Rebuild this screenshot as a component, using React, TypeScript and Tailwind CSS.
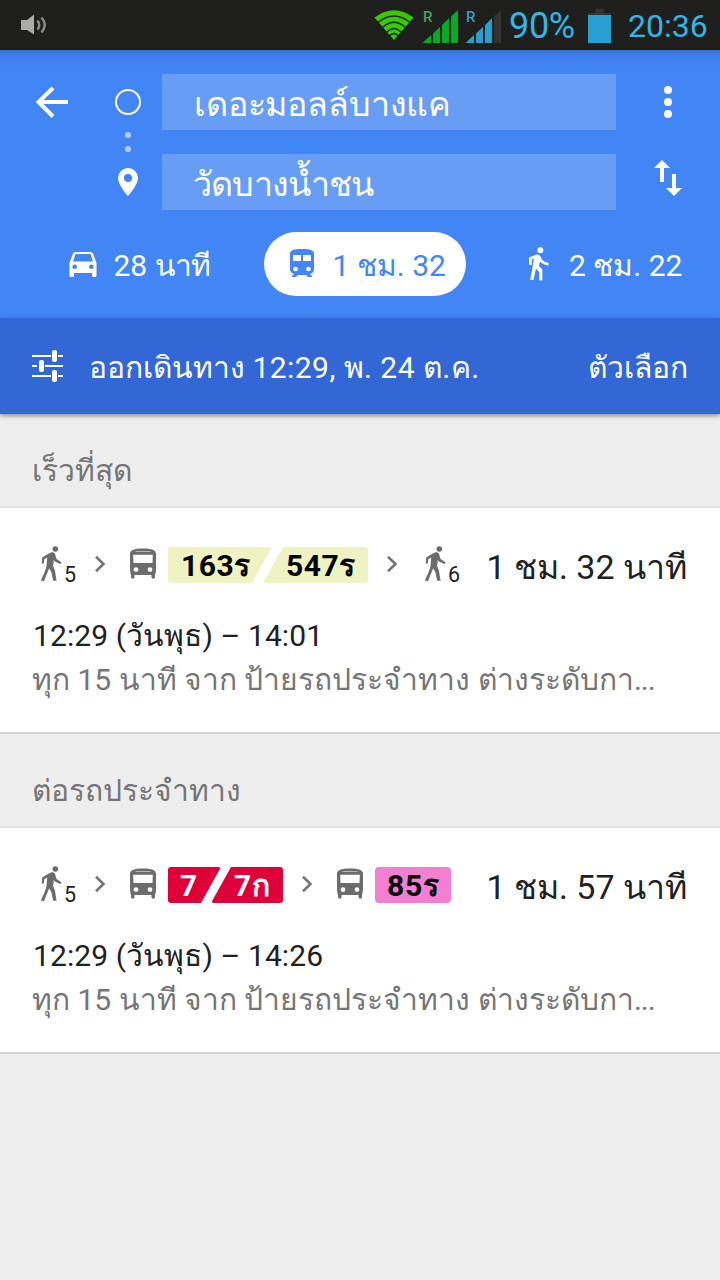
import type { ReactNode } from "react";

function SoundIcon() {
  return (
    <svg className="ml-[20px] h-[22px] w-[28px]" viewBox="0 0 28 22">
      <path d="M1 6h6l7-5.500v20L7 16H1z" fill="#aaa" />
      <path d="M17.500 6.500q3.600 4.500 0 9M21.500 3.500q6.500 7.500 0 15" fill="none" stroke="#8c8c8b" strokeWidth="2.400" />
    </svg>
  );
}

function WifiIcon() {
  return (
    <svg className="h-[32px] w-[40px]" viewBox="0 0 40 32">
      <path d="M.5 8.500Q20-6 39.500 8.500L20 31z" fill="#3ac800" />
      <path d="M4.500 13Q20 1 35.500 13M9 18Q20 8.500 31 18M13 23Q20 16 27 23M16 26.500Q20 22.500 24 26.500" fill="none" stroke="#16202b" strokeWidth="1.300" />
    </svg>
  );
}

function Signal({ color, letter, last }: { color: string; letter: string; last: string }) {
  return (
    <div className="relative h-[34px] w-[37px]">
      <svg className="h-[34px] w-[37px]" viewBox="0 0 37 34">
        <path d="M.5 33L9 25v8zM11 23.500l7-6.500v16h-7zM20 15l7-7v25h-7z" fill={color} />
        <path d="M29 6.500l7-6.500v33h-7z" fill={last} />
      </svg>
      <span className="absolute left-[1px] top-[-1px] text-[15px] font-medium leading-[17px]" style={{ color: letter }}>R</span>
    </div>
  );
}

function Walk({ minutes }: { minutes: string }) {
  return (
    <div className="mt-px flex h-[38px] w-[36px] items-start">
      <svg className="h-[36px] w-[23px] shrink-0 overflow-visible" viewBox="0 0 23 36">
        <circle cx="15.300" cy="3" r="2.800" fill="#6b6c6b" />
        <path d="M9.500 7.300Q12 5.300 14.800 7.300L16.500 13l5 3.300-.9 1.700-5.400-2.300-1.400-1.700-.6 6 1.700 4.500 1.700 10.300h-3.400l-2-9-2-3.600-2.600 6.500L4 35.300.8 34.500l4-8.700 1.700-5.800.7-8.400-2.800 1.600-.7 4.600-2.100-.3.7-6.300z" fill="#6b6c6b" />
      </svg>
      <span className="ml-[1px] mt-[16px] text-[21.5px] leading-[26px] text-[#212121]">{minutes}</span>
    </div>
  );
}

function Chevron() {
  return (
    <svg className="h-[18px] w-[12px] shrink-0" viewBox="0 0 12 18">
      <path d="M2 1.700l7.500 7.300-7.500 7.300" fill="none" stroke="#757575" strokeWidth="2.600" />
    </svg>
  );
}

function Bus() {
  return (
    <svg className="h-[32px] w-[28px] shrink-0" viewBox="0 0 28 32">
      <path fillRule="evenodd" fill="#6b6c6b" d="M1 6C1 2 5 .5 14 .5S27 2 27 6v14q0 5-1 7v2q0 1.800-1.700 1.800T22.500 29v-2h-17v2q0 1.800-1.700 1.800T2 29v-2q-1-2-1-7zM4.200 6.700l.3 8.300h19l.3-8.300zM7 19.200a2.400 2.400 0 1 0 0 4.800 2.400 2.400 0 0 0 0-4.800zM21 19.200a2.400 2.400 0 1 0 0 4.800 2.400 2.400 0 0 0 0-4.800zM6.500 3.200v.5h15v-.5z" />
    </svg>
  );
}

function Card({ total, times, children }: { total: string; times: string; children: ReactNode }) {
  return (
    <article className="h-[226px] border-b-2 border-[#d2d2d2] bg-white pl-[33px] pr-[33px]">
      <div className="flex h-[105px] items-start justify-between">
        <div className="flex h-[112px] items-center pl-[7px]">{children}</div>
        <span className="whitespace-nowrap pt-[39px] text-[34px] leading-[40px] text-[#212121]">{total}</span>
      </div>
      <p className="h-[44px] whitespace-nowrap text-[30px] leading-[46px] tracking-[0.1px] text-[#212121]">{times}</p>
      <p className="-ml-px h-[44px] whitespace-nowrap text-[30px] leading-[46px] text-[#757575]">ทุก 15 นาที จาก ป้ายรถประจำทาง ต่างระดับกา<span className="tracking-[-1px]">...</span></p>
    </article>
  );
}

function Heading({ children }: { children: ReactNode }) {
  return <h2 className="h-[94px] whitespace-nowrap border-b-2 border-[#e4e4e4] bg-[#eee] pl-[32px] pt-[37px] text-[30px] leading-[40px] text-[#757575]">{children}</h2>;
}

export default function App() {
  return (
    <main className="h-[1280px] w-[720px] overflow-hidden bg-[#eee] font-[Roboto,'Droid_Sans_Thai',sans-serif]">
      <div className="flex h-[50px] items-center bg-[#1e1e1c] text-[#33b5e5]">
        <SoundIcon />
        <div className="ml-[326px] flex items-center">
          <WifiIcon />
          <div className="ml-[8px] mt-[4px]"><Signal color="#00ab25" letter="#4fa067" last="#00ab25" /></div>
          <div className="ml-[6px] mt-[4px]"><Signal color="#279fd0" letter="#3c9cc6" last="#333" /></div>
        </div>
        <span className="ml-[7px] w-[75px] whitespace-nowrap pt-[2px] text-[36px] leading-[50px] tracking-[-0.3px]">90%</span>
        <svg className="ml-[4px] mt-[2px] h-[36px] w-[24px]" viewBox="0 0 24 36">
          <path d="M7 1h9v5H7zM0 5h23v3H0z" fill="#333" />
          <path d="M0 7h23v28H0z" fill="#279fd0" />
        </svg>
        <span className="ml-[16px] whitespace-nowrap pt-[2px] text-[32px] leading-[50px]">20:36</span>
      </div>
      <header className="flex h-[268px] flex-col bg-[#4285f4] bg-[linear-gradient(#386fca,#3e7ee8_4px,#4285f4_16px)] text-white">
        <div className="flex h-[160px] pt-[24px]">
          <svg className="ml-[35px] mt-[12px] h-[33px] w-[34px]" viewBox="0 0 34 33">
            <path d="M33 16H4M18 2L3.500 16 18 30.500" fill="none" stroke="white" strokeWidth="4" />
          </svg>
          <svg className="ml-[43px] h-[136px] w-[32px]" viewBox="0 0 32 136">
            <circle cx="16" cy="28" r="12" fill="none" stroke="white" strokeWidth="2" />
            <circle cx="16" cy="61" r="3" fill="#b3cefb" />
            <circle cx="16" cy="75" r="3" fill="#b3cefb" />
            <path fillRule="evenodd" fill="white" d="M16 94a10 10 0 0 1 10 10c0 7-10 18-10 18S6 111 6 104a10 10 0 0 1 10-10zm0 6a4 4 0 1 0 0 8 4 4 0 0 0 0-8z" />
          </svg>
          <div className="ml-[18px] flex w-[454px] flex-col gap-[24px] text-[34px] leading-[60px]">
            <div className="h-[56px] whitespace-nowrap bg-[#689df6] pl-[32px] tracking-[-0.15px]">เดอะมอลล์บางแค</div>
            <div className="h-[56px] whitespace-nowrap bg-[#689df6] pl-[31px] tracking-[-0.8px]">วัดบางน้ำชน</div>
          </div>
          <svg className="ml-[36px] h-[136px] w-[32px]" viewBox="0 0 32 136" fill="white">
            <circle cx="16" cy="16" r="4" />
            <circle cx="16" cy="28" r="4" />
            <circle cx="16" cy="40" r="4" />
            <path d="M2 94l8-8 8 8h-6v14H8V94zM20 100h4v14h6l-8 8-8-8h6z" />
          </svg>
        </div>
        <div className="flex h-[108px] items-center text-[30px] leading-[64px]">
          <div className="flex h-[64px] w-[264px] items-center pl-[69px]">
            <svg className="h-[25px] w-[28px]" viewBox="0 0 28 25">
              <path fillRule="evenodd" fill="white" d="M6.500 0h15q2 0 2.700 2L27.500 11v12.500q0 1.500-1.500 1.500h-1.500q-1.500 0-1.500-1.500V21H5v2.500Q5 25 3.500 25H2Q.5 25 .5 23.500V11L3.800 2Q4.500 0 6.500 0zM6.500 2L4 9.500h20L21.500 2zM5.700 12.500a2.300 2.300 0 1 0 0 4.600 2.300 2.300 0 0 0 0-4.600zm16.600 0a2.300 2.300 0 1 0 0 4.600 2.300 2.300 0 0 0 0-4.600z" />
            </svg>
            <span className="ml-[16.500px] whitespace-nowrap pt-[3px]">28 <span className="tracking-[-0.8px]">นาที</span></span>
          </div>
          <div className="flex h-[64px] w-[202px] items-center rounded-full bg-white pl-[26px] text-[#4285f4]">
            <svg className="-mt-[2px] h-[30px] w-[24px]" viewBox="0 0 24 30">
              <path fillRule="evenodd" fill="#4285f4" d="M0 6C0 2 3.500 1 12 1s12 1 12 5v15q0 4-4 5l2 2v1h-4l-2-2H8l-2 2H2v-1l2-2q-4-1-4-5zM3 7v6h8V7zM13 7v6h8V7zM5.500 18.700a2.300 2.300 0 1 0 0 4.600 2.300 2.300 0 0 0 0-4.600zm13 0a2.300 2.300 0 1 0 0 4.600 2.300 2.300 0 0 0 0-4.600z" />
            </svg>
            <span className="ml-[18.500px] whitespace-nowrap pt-[3px]">1 ชม. 32</span>
          </div>
          <div className="flex h-[64px] items-center pl-[62px]">
            <svg className="h-[34px] w-[21px]" viewBox="0 0 21 34" fill="white">
              <circle cx="12.300" cy="3.300" r="3" />
              <path d="M1 10.500L8.500 7.500q2.500-.5 4 2l1 2.500q2 3 7 3.700v2.700q-5-.5-8.500-4l-1 4.600 3.300 3.400V33.500h-3V25L8 21.700 5.300 33H2.200L6 11.500l-2.300 1V18H1z" />
            </svg>
            <span className="ml-[20px] whitespace-nowrap pt-[3px]">2 ชม. 22</span>
          </div>
        </div>
      </header>
      <div className="relative flex h-[96px] items-center bg-[#3367d6] pl-[32px] pr-[32px] text-[30px] leading-[96px] text-white shadow-[0_2px_4px_rgba(0,0,0,0.4)]">
        <svg className="h-[32px] w-[32px]" viewBox="0 0 32 32" fill="white">
          <path d="M0 5h19v2H0zM26 5h5v2h-5zM0 15h5v2H0zM13 15h18v2H13zM0 25h19v2H0zM26 25h5v2h-5z" />
          <rect x="20" width="5" height="12" rx="2" /><rect x="7" y="10" width="5" height="12" rx="2" /><rect x="20" y="20" width="5" height="12" rx="2" />
        </svg>
        <span className="ml-[25px] whitespace-nowrap pt-[3px]">ออกเดินทาง <span className="tracking-[0.45px]">12:29, พ. 24 ต.ค.</span></span>
        <span className="ml-auto whitespace-nowrap pt-[3px]">ตัวเลือก</span>
      </div>
      <Heading>เร็วที่สุด</Heading>
      <Card total="1 ชม. 32 นาที" times="12:29 (วันพุธ) – 14:01">
        <Walk minutes="5" />
        <div className="ml-[18px] flex"><Chevron /></div>
        <div className="ml-[23px] flex"><Bus /></div>
        <div className="ml-[11px] mt-[2px] flex h-[36px] text-[30px] font-bold leading-[37px] tracking-[0.5px] text-black">
          <span className="w-[104px] whitespace-nowrap rounded-[3px] bg-[#eef3c1] pl-[13px] [clip-path:polygon(0_0,100%_0,84px_100%,0_100%)]">163ร</span>
          <span className="-ml-[9px] w-[105px] whitespace-nowrap rounded-[3px] bg-[#eef3c1] pl-[23px] [clip-path:polygon(20px_0,100%_0,100%_100%,0_100%)]">547ร</span>
        </div>
        <div className="ml-[18px] flex"><Chevron /></div>
        <div className="ml-[26px]"><Walk minutes="6" /></div>
      </Card>
      <Heading>ต่อรถประจำทาง</Heading>
      <Card total="1 ชม. 57 นาที" times="12:29 (วันพุธ) – 14:26">
        <Walk minutes="5" />
        <div className="ml-[18px] flex"><Chevron /></div>
        <div className="ml-[23px] flex"><Bus /></div>
        <div className="ml-[11px] mt-[2px] flex h-[36px] text-[30px] font-bold leading-[37px] tracking-[0.4px] text-white">
          <span className="w-[53px] whitespace-nowrap rounded-[3px] bg-[#df0039] pl-[12px] [clip-path:polygon(0_0,100%_0,33px_100%,0_100%)]">7</span>
          <span className="-ml-[10px] w-[72px] whitespace-nowrap rounded-[3px] bg-[#df0039] pl-[23px] [clip-path:polygon(20px_0,100%_0,100%_100%,0_100%)]">7ก</span>
        </div>
        <div className="ml-[18px] flex"><Chevron /></div>
        <div className="ml-[23px] flex"><Bus /></div>
        <div className="ml-[11px] mt-[2px] h-[36px] w-[76px] whitespace-nowrap rounded-[4px] bg-[#f37fd2] pl-[12px] text-[30px] font-bold leading-[37px] tracking-[0.8px] text-black">85ร</div>
      </Card>
    </main>
  );
}
